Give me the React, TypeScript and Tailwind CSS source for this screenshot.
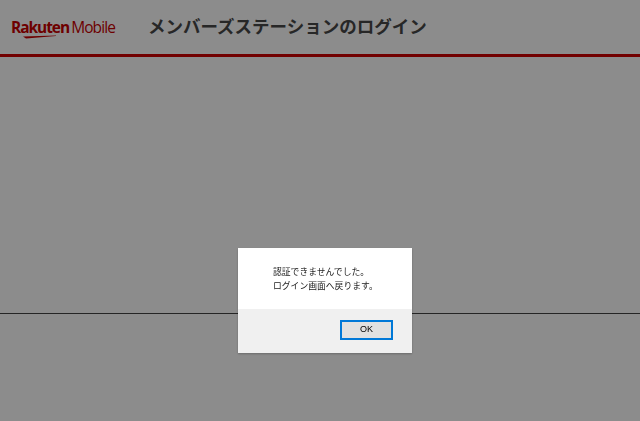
const jp = "font-['Liberation_Sans','Noto_Sans_CJK_JP',sans-serif]";

function Logo() {
  return (
    <div className="relative mt-[1px] flex w-[104px] items-baseline font-['Open_Sans',sans-serif] leading-none text-[#c80000]">
      <span className="text-[15.5px] font-bold tracking-[-1.05px]">Rakuten</span>
      <span className="ml-[2px] text-[15.5px] tracking-[-0.9px]">Mobile</span>
      <svg className="absolute left-[12px] top-[15px]" width="34" height="4" viewBox="0 0 34 4">
        <path d="M0 1.5 L3 3.6 L33 1 L33 0.4 Z" fill="#c80000" />
      </svg>
    </div>
  );
}

export default function App() {
  return (
    <div className={`h-[421px] w-[640px] overflow-hidden bg-white ${jp}`}>
      <header className="flex h-[57px] items-center border-b-[3px] border-[#d00000] pl-[11px]">
        <Logo />
        <h1 className="ml-[33px] mt-[2px] text-[17.5px] font-bold leading-none text-[#484848]">メンバーズステーションのログイン</h1>
      </header>
      <main className="h-[257px] border-b border-[#444444]" />

      {/* dialog overlay */}
      <div className="fixed inset-0 flex items-start justify-center bg-black/45 pl-[10px] pt-[248px]">
        <div className="w-[174px] bg-white shadow-[0_1px_2px_rgba(0,0,0,0.25)]">
          <div className="h-[61px] pl-[35px] pt-[18px] text-[8.8px] leading-[13.5px] text-[#222222]">
            <p>認証できませんでした。</p>
            <p>ログイン画面へ戻ります。</p>
          </div>
          <div className="flex h-[44px] items-start justify-end bg-[#f0f0f0] pr-[19px] pt-[11px]">
            <button className="h-[20px] w-[53px] border-2 border-[#0078d7] bg-[#e1e1e1] text-[9px] text-black">OK</button>
          </div>
        </div>
      </div>
    </div>
  );
}
